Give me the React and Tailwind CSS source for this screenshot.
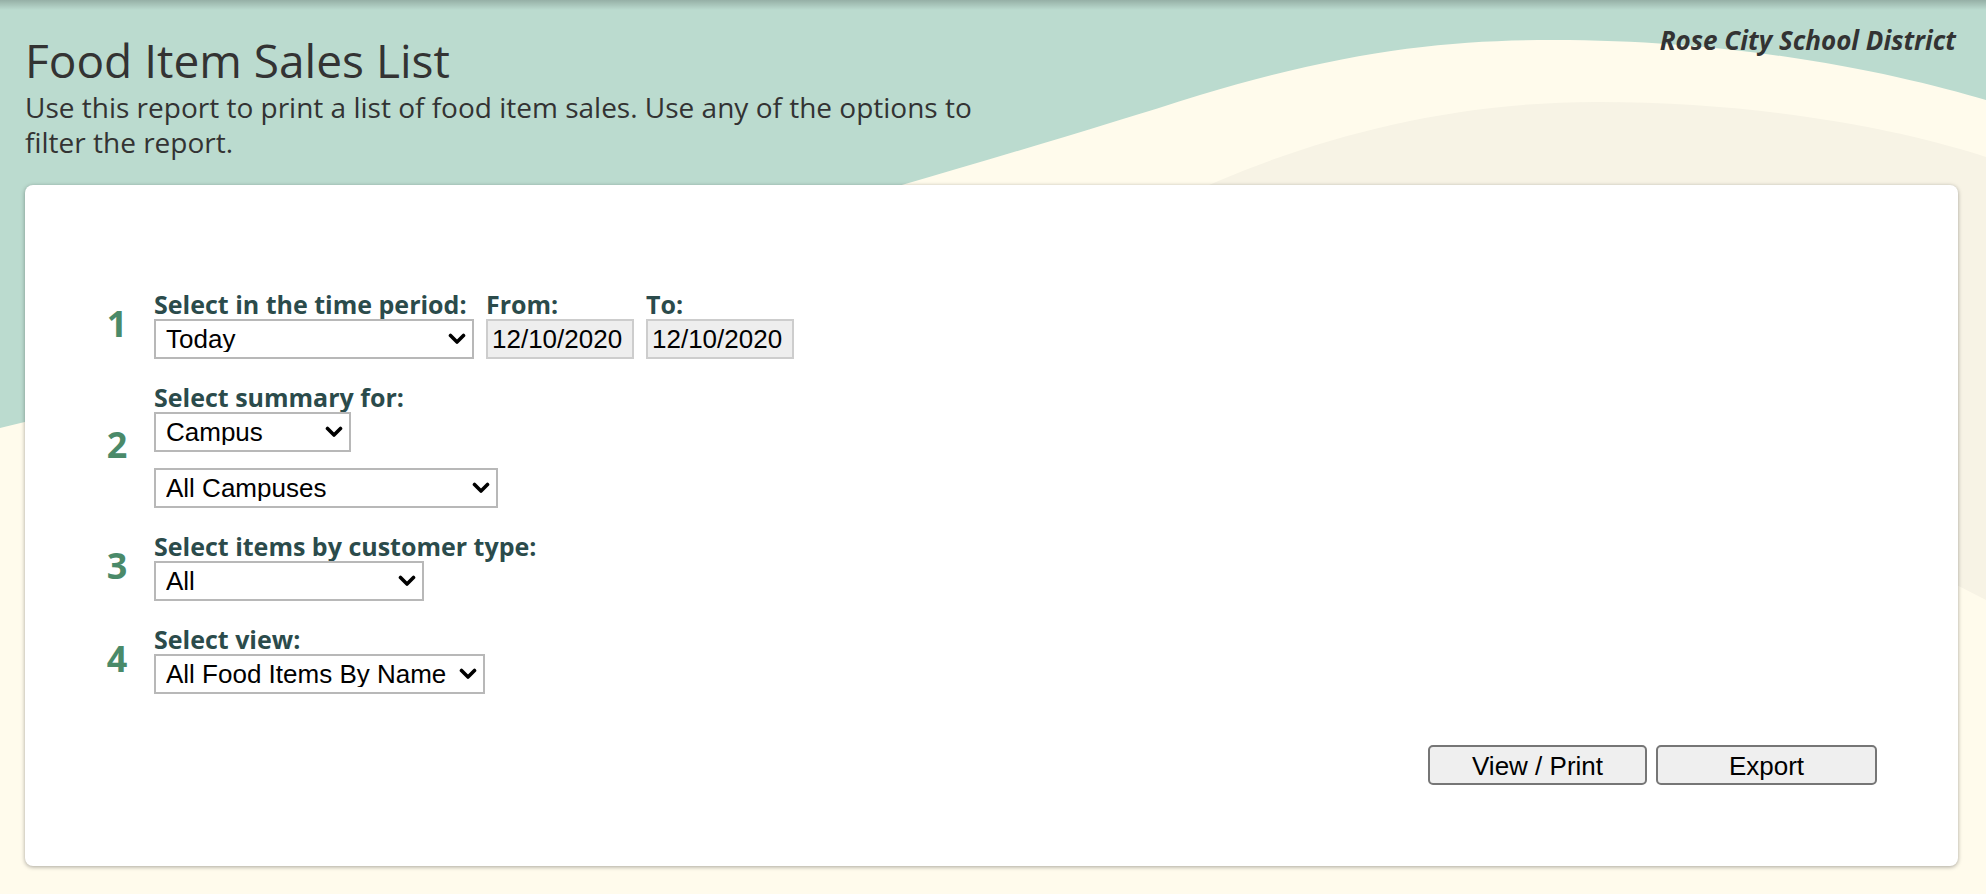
import { useState } from "react";

const sans = "font-['Open_Sans','Noto_Sans',sans-serif]";
const arial = "font-['Liberation_Sans',Arial,sans-serif]";

function Chevron() {
  return (
    <svg
      viewBox="0 0 18 12"
      className="pointer-events-none absolute right-[8px] top-1/2 h-[12px] w-[18px] -translate-y-1/2"
      aria-hidden="true"
    >
      <path d="M2.5 2.5 L9 9 L15.5 2.5" fill="none" stroke="#000" strokeWidth="3.6" strokeLinecap="round" strokeLinejoin="round" />
    </svg>
  );
}

function Dropdown({ value, className }) {
  return (
    <div className={`relative ${className}`}>
      <select
        defaultValue={value}
        className={`h-[40px] w-full appearance-none rounded-none border-2 border-[#b8b8b8] bg-white pl-[10px] pr-[30px] text-[26px] leading-none text-black outline-none ${arial}`}
      >
        <option>{value}</option>
      </select>
      <Chevron />
    </div>
  );
}

function DateBox({ value }) {
  return (
    <input
      type="text"
      readOnly
      defaultValue={value}
      className={`h-[40px] w-[148px] border-2 border-[#cdcdcd] bg-[#eeeeee] px-[4px] text-[26px] text-black outline-none ${arial}`}
    />
  );
}

function Label({ children }) {
  return (
    <div className={`text-[25px] font-bold leading-[30px] text-[#2b4b4b] ${sans}`}>{children}</div>
  );
}

function Step({ num, children }) {
  return (
    <div className="flex items-center gap-[15px]">
      <div className={`w-[44px] text-center text-[36px] font-bold leading-none text-[#4a8a69] ${sans}`}>{num}</div>
      <div className="flex flex-col">{children}</div>
    </div>
  );
}

export default function App() {
  const [range] = useState("Today");

  return (
    <div className="relative min-h-screen w-full overflow-hidden bg-[#fffbec]">
      <svg
        className="absolute inset-0 h-full w-full"
        viewBox="0 0 1986 894"
        preserveAspectRatio="none"
        aria-hidden="true"
      >
        <rect x="0" y="0" width="1986" height="894" fill="#bbdbcf" />
        <path
          d="M0 428 C400 330 900 190 1200 95 C1350 50 1450 40 1553 40 C1750 40 1900 75 1986 100 L1986 894 L0 894 Z"
          fill="#fffbec"
        />
        <path
          d="M1000 300 C1150 200 1350 102 1597 102 C1780 102 1920 135 1986 157 L1986 600 C1700 450 1300 380 1000 300 Z"
          fill="#f7f3e5"
        />
      </svg>
      <div className="pointer-events-none absolute inset-x-0 top-0 h-[10px] bg-linear-to-b from-black/20 to-transparent" />

      <div className="relative flex flex-col">
        <header className="flex items-start justify-between pl-[25px] pr-[30px] pt-[24px]">
          <div className={`pt-[9px] text-[#333333] ${sans}`}>
            <h1 className="text-[46px] font-normal leading-[54px]">Food Item Sales List</h1>
            <p className="mt-[3px] text-[28px] leading-[35px]">
              Use this report to print a list of food item sales. Use any of the options to
              <br />
              filter the report.
            </p>
          </div>
          <div className={`text-[26px] font-bold italic leading-[32px] text-[#333333] ${sans}`}>Rose City School District</div>
        </header>

        <main className="ml-[25px] mr-[28px] mt-[25px] rounded-[8px] bg-white pb-[81px] pl-[70px] pr-[81px] pt-[104px] shadow-[0_1px_4px_rgba(0,0,0,0.35)]">
          <div className="flex flex-col gap-[23px]">
            <Step num="1">
              <div className="flex gap-[12px]">
                <div className="flex flex-col">
                  <Label>Select in the time period:</Label>
                  <Dropdown value={range} className="w-[320px]" />
                </div>
                <div className="flex flex-col">
                  <Label>From:</Label>
                  <DateBox value="12/10/2020" />
                </div>
                <div className="flex flex-col">
                  <Label>To:</Label>
                  <DateBox value="12/10/2020" />
                </div>
              </div>
            </Step>

            <Step num="2">
              <Label>Select summary for:</Label>
              <Dropdown value="Campus" className="w-[197px]" />
              <Dropdown value="All Campuses" className="mt-[16px] w-[344px]" />
            </Step>

            <Step num="3">
              <Label>Select items by customer type:</Label>
              <Dropdown value="All" className="w-[270px]" />
            </Step>

            <Step num="4">
              <Label>Select view:</Label>
              <Dropdown value="All Food Items By Name" className="w-[331px]" />
            </Step>
          </div>

          <div className="mt-[51px] flex justify-end gap-[9px]">
            <button className={`h-[40px] w-[219px] rounded-[5px] border-2 border-[#767676] bg-[#efefef] text-[26px] text-black ${arial}`}>
              View / Print
            </button>
            <button className={`h-[40px] w-[221px] rounded-[5px] border-2 border-[#767676] bg-[#efefef] text-[26px] text-black ${arial}`}>
              Export
            </button>
          </div>
        </main>
      </div>
    </div>
  );
}
